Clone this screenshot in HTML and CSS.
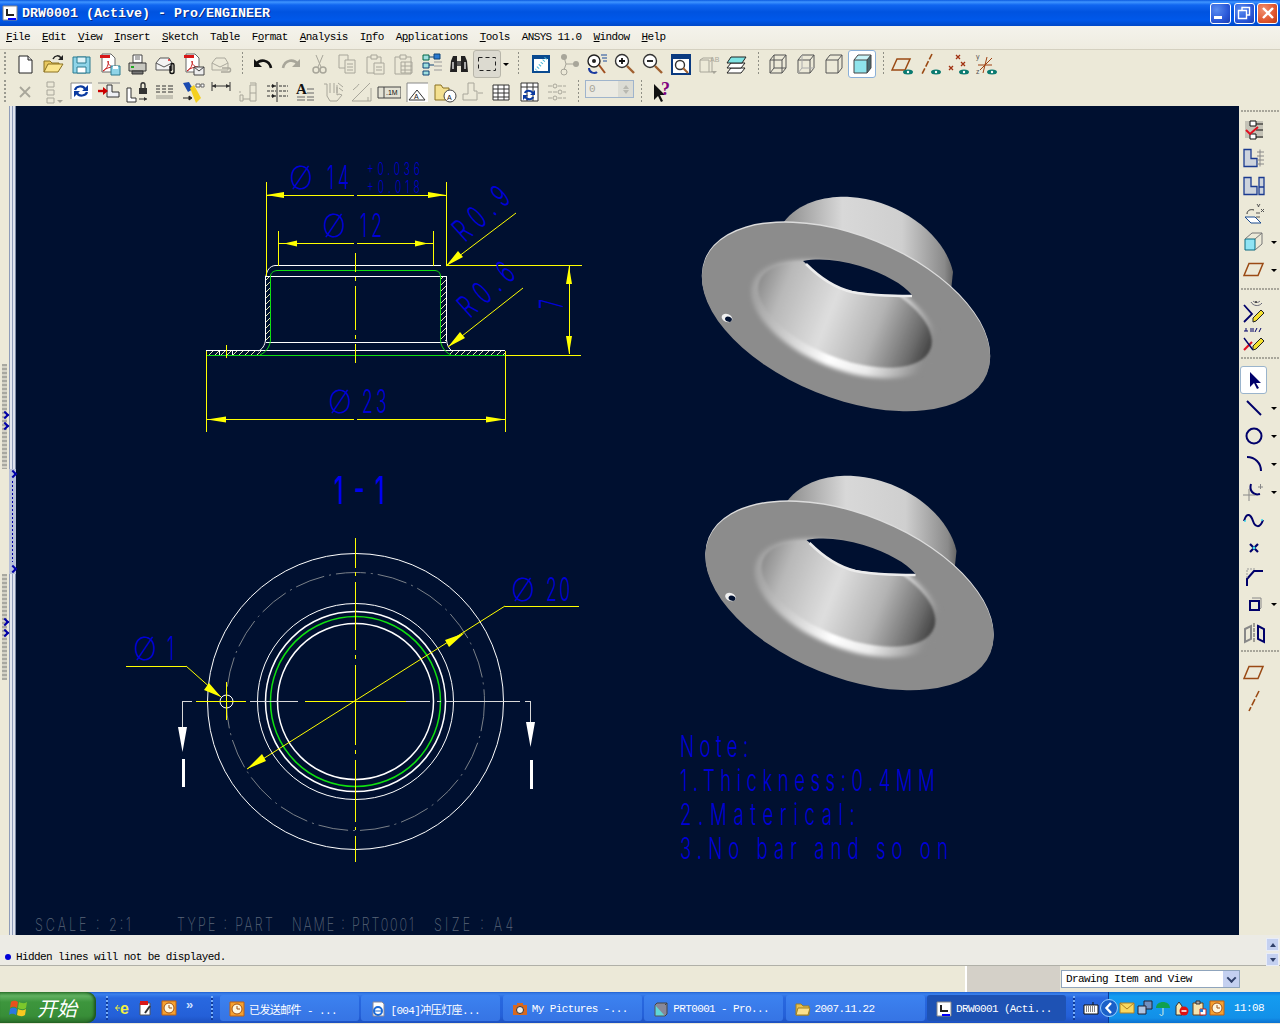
FILE: index.html
```html
<!DOCTYPE html>
<html lang="en">
<head>
<meta charset="utf-8">
<title>DRW0001 (Active) - Pro/ENGINEER</title>
<link rel="stylesheet" href="styles.css">
</head>
<body>
<svg class="sprite" aria-hidden="true">
<defs>
<symbol id="new" viewBox="0 0 24 24"><path d="M6 4h9l4 4v13H6z" fill="#fff" stroke="#222"/><path d="M15 4v4h4" fill="#ddd" stroke="#222"/></symbol>
<symbol id="open" viewBox="0 0 24 24"><path d="M3 20V9h6l2 2h7v3" fill="#e8c860" stroke="#8a7020"/><path d="M3 20l4-8h15l-5 8z" fill="#fbe58c" stroke="#8a7020"/><path d="M12 7c2-4 6-4 8-1" fill="none" stroke="#222" stroke-width="1.5"/><path d="M22 3v5h-5z" fill="#222"/></symbol>
<symbol id="save" viewBox="0 0 24 24"><path d="M4 5h17v16H4z" fill="#8fd4e8" stroke="#2a7a90"/><path d="M8 5h9v6H8z" fill="#dff3f8" stroke="#2a7a90"/><path d="M8 15h9v6H8z" fill="#fff" stroke="#2a7a90"/></symbol>
<symbol id="pdf" viewBox="0 0 24 24"><path d="M5 2h9l4 4v14H5z" fill="#fff" stroke="#666"/><path d="M3 3h10v3H3z" fill="#d81818"/><path d="M6 19c4-2 6-7 5-10 0 4 3 6 6 6-4 0-8 1-11 4z" fill="none" stroke="#c82020"/><path d="M14 14h9v9h-9z" fill="#8fd4e8" stroke="#2a7a90"/><path d="M16 14h5v3h-5z" fill="#fff"/></symbol>
<symbol id="pdfm" viewBox="0 0 24 24"><path d="M5 2h9l4 4v14H5z" fill="#fff" stroke="#666"/><path d="M3 3h10v3H3z" fill="#d81818"/><path d="M6 19c4-2 6-7 5-10 0 4 3 6 6 6-4 0-8 1-11 4z" fill="none" stroke="#c82020"/><path d="M13 15h10v8H13z" fill="#eee" stroke="#444"/><path d="M13 15l5 4 5-4" fill="none" stroke="#444"/></symbol>
<symbol id="print" viewBox="0 0 24 24"><path d="M8 3h9v8H8z" fill="#fff" stroke="#444"/><path d="M4 11h17v8H4z" fill="#c8c8c0" stroke="#333"/><path d="M7 19h11v3H7z" fill="#777" stroke="#333"/><path d="M6 14h3v2H6z" fill="#2a2"/><path d="M10 5h5M10 7h5" stroke="#666"/></symbol>
<symbol id="mail" viewBox="0 0 24 24"><path d="M3 11l4-5h9l3 5v7H3z" fill="#f4f4f4" stroke="#555"/><path d="M3 11l8 4 8-4" fill="none" stroke="#555"/><circle cx="16" cy="8" r="1" fill="#d22"/><path d="M17 14v6c0 2 4 2 4 0v-7c0-2-3-2-3 0v6" fill="none" stroke="#111" stroke-width="1.4"/></symbol>
<symbol id="maild" viewBox="0 0 24 24"><path d="M3 11l4-5h9l3 5v7H3z" fill="none" stroke="#aaa89c"/><path d="M3 11l8 4 8-4" fill="none" stroke="#aaa89c"/><path d="M12 20h8c2 0 2-4 0-4h-7" fill="none" stroke="#aaa89c" stroke-width="1.5"/></symbol>
<symbol id="undo" viewBox="0 0 24 24"><path d="M5 12c4-5 13-5 15 4" fill="none" stroke="#111" stroke-width="2.6"/><path d="M3 7v8h8z" fill="#111"/></symbol>
<symbol id="redo" viewBox="0 0 24 24"><path d="M19 12c-4-5-13-5-15 4" fill="none" stroke="#a8a69a" stroke-width="2.6"/><path d="M21 7v8h-8z" fill="#a8a69a"/></symbol>
<symbol id="cut" viewBox="0 0 24 24"><path d="M9 3l5 12M16 3l-5 12" stroke="#a8a69a" fill="none"/><circle cx="9" cy="18" r="3" fill="none" stroke="#a8a69a" stroke-width="1.5"/><circle cx="16" cy="18" r="3" fill="none" stroke="#a8a69a" stroke-width="1.5"/></symbol>
<symbol id="copy" viewBox="0 0 24 24"><path d="M4 3h9v13H4z" fill="none" stroke="#a8a69a"/><path d="M10 8h10v13H10z" fill="#ece9d8" stroke="#a8a69a"/><path d="M12 12h6M12 15h6M12 18h6" stroke="#a8a69a"/></symbol>
<symbol id="paste" viewBox="0 0 24 24"><path d="M4 5h14v16H4z" fill="none" stroke="#a8a69a"/><path d="M8 3h6v4H8z" fill="#ece9d8" stroke="#a8a69a"/><path d="M11 11h10v11H11z" fill="#ece9d8" stroke="#a8a69a"/><path d="M13 15h6M13 18h6" stroke="#a8a69a"/></symbol>
<symbol id="pastes" viewBox="0 0 24 24"><path d="M4 5h16v17H4z" fill="none" stroke="#a8a69a"/><path d="M9 3h6v4H9z" fill="#ece9d8" stroke="#a8a69a"/><path d="M10 10h11v11H10zM10 14h11M10 18h11M14 10v11" fill="none" stroke="#a8a69a"/></symbol>
<symbol id="tree" viewBox="0 0 24 24"><path d="M4 3h6v5H4z" fill="#a0e0e0" stroke="#064"/><path d="M4 11h6v5H4zM4 19h6v4H4z" fill="#a0e0e0" stroke="#147"/><path d="M10 5h5M10 13h5" stroke="#147"/><path d="M15 2h6v5h-6z" fill="#2a7ad0" stroke="#147"/><path d="M15 10h8M15 14h8M15 18h8" stroke="#999"/></symbol>
<symbol id="binoc" viewBox="0 0 24 24"><path d="M4 9l2-5h4v16H3zM20 9l-2-5h-4v16h7z" fill="#222"/><path d="M10 9h4v5h-4z" fill="#555"/><path d="M5 10h2v7H5zM17 10h2v7h-2z" fill="#aaa"/></symbol>
<symbol id="sel" viewBox="0 0 24 24"><path d="M3.500 5.500h17v13h-17z" fill="none" stroke="#222" stroke-dasharray="4 3"/></symbol>
<symbol id="repaint" viewBox="0 0 24 24"><path d="M3 3h18v18H3z" fill="#0a4a90"/><path d="M5 7h14v12H5z" fill="#fff"/><path d="M17 6L7 18" stroke="#4ab8d8" stroke-width="3" stroke-dasharray="1 2"/></symbol>
<symbol id="nodes" viewBox="0 0 24 24"><circle cx="7" cy="5" r="3" fill="#a8a69a"/><circle cx="19" cy="12" r="3" fill="#a8a69a"/><circle cx="7" cy="20" r="3" fill="none" stroke="#a8a69a"/><path d="M7 5l2 7 8 0M9 12l-2 6" stroke="#a8a69a" fill="none"/></symbol>
<symbol id="spin" viewBox="0 0 24 24"><circle cx="9" cy="9" r="6" fill="#fff" stroke="#222" stroke-width="1.4"/><circle cx="9" cy="9" r="2" fill="#222"/><path d="M14 13l6 8" stroke="#a05020" stroke-width="2"/><path d="M16 3h6M17 6h5M18 9h4" stroke="#1a4a9a"/><path d="M4 16c0 5 6 6 8 4" fill="none" stroke="#1a3aa0" stroke-width="2"/></symbol>
<symbol id="zin" viewBox="0 0 24 24"><circle cx="9" cy="9" r="6.500" fill="#fff" stroke="#333" stroke-width="1.4"/><path d="M6 9h6M9 6v6" stroke="#111" stroke-width="1.8"/><path d="M14 14l7 7" stroke="#a06030" stroke-width="2.4"/></symbol>
<symbol id="zout" viewBox="0 0 24 24"><circle cx="9" cy="9" r="6.500" fill="#fff" stroke="#333" stroke-width="1.4"/><path d="M6 9h6" stroke="#111" stroke-width="1.8"/><path d="M14 14l7 7" stroke="#a06030" stroke-width="2.4"/></symbol>
<symbol id="fit" viewBox="0 0 24 24"><path d="M3 3h18v19H3z" fill="#fff" stroke="#0a3a80" stroke-width="2"/><path d="M3 4h18v3H3z" fill="#0a3a80"/><circle cx="11" cy="13" r="4.500" fill="none" stroke="#333" stroke-width="1.4"/><path d="M14 16l5 5" stroke="#a06030" stroke-width="2"/></symbol>
<symbol id="ab" viewBox="0 0 24 24"><path d="M3 8l3-2h9v14H3zM3 8h9v12" fill="none" stroke="#a8a69a"/><text x="13" y="10" class="tiny dis">AB</text><path d="M14 19h6l-3 3z" fill="#a8a69a"/></symbol>
<symbol id="layers" viewBox="0 0 24 24"><path d="M6 16h14l-4 5H2z" fill="#fff" stroke="#222"/><path d="M6 11h14l-4 5H2z" fill="#fff" stroke="#222"/><path d="M6 5h15l-4 6H2z" fill="#7fe4e4" stroke="#222"/></symbol>
<symbol id="w1" viewBox="0 0 24 24"><path d="M4 8h12v13H4zM4 8l4-5h12v13l-4 5M16 8l4-5M8 3v13l-4 5M8 16h12" fill="none" stroke="#555"/></symbol>
<symbol id="w2" viewBox="0 0 24 24"><path d="M4 8h12v13H4zM4 8l4-5h12v13l-4 5M16 8l4-5" fill="none" stroke="#555"/><path d="M8 3v13l-4 5M8 16h12" fill="none" stroke="#aaa"/></symbol>
<symbol id="w3" viewBox="0 0 24 24"><path d="M4 8h12v13H4zM4 8l4-5h12v13l-4 5M16 8l4-5" fill="none" stroke="#555"/></symbol>
<symbol id="shade" viewBox="0 0 24 24"><path d="M4 8h13v13H4z" fill="#8fe4ec"/><path d="M4 8l4-5h13l-4 5z" fill="#c8f4f8"/><path d="M17 8l4-5v13l-4 5z" fill="#4a6a70"/><path d="M4 8h13v13H4zM4 8l4-5h13v13l-4 5M17 8l4-5" fill="none" stroke="#444"/></symbol>
<symbol id="pe" viewBox="0 0 24 24"><path d="M6 7h13l-5 11H1z" fill="none" stroke="#9a4a14" stroke-width="1.5"/><ellipse cx="17" cy="20" rx="5" ry="2.500" fill="#0a7a70"/><circle cx="17" cy="20" r="1.200" fill="#fff"/></symbol>
<symbol id="ae" viewBox="0 0 24 24"><path d="M13 2L3 22" stroke="#9a4a14" stroke-width="1.6" stroke-dasharray="6 2" fill="none"/><ellipse cx="17" cy="20" rx="5" ry="2.500" fill="#0a7a70"/><circle cx="17" cy="20" r="1.200" fill="#fff"/></symbol>
<symbol id="xe" viewBox="0 0 24 24"><path d="M9 3l4 4M13 3L9 7M2 14l4 4M6 14l-4 4M14 10l4 4M18 10l-4 4" stroke="#a03010" stroke-width="1.300"/><ellipse cx="17" cy="20" rx="5" ry="2.500" fill="#0a7a70"/><circle cx="17" cy="20" r="1.200" fill="#fff"/></symbol>
<symbol id="ce" viewBox="0 0 24 24"><path d="M12 5l-4 16M3 13h14M17 6L5 18" stroke="#a04010" fill="none"/><text x="1" y="7" class="tiny gr">y</text><text x="1" y="22" class="tiny gr">z</text><ellipse cx="17" cy="20" rx="5" ry="2.500" fill="#0a7a70"/><circle cx="17" cy="20" r="1.200" fill="#fff"/></symbol>
<symbol id="x" viewBox="0 0 24 24"><path d="M7 7l10 10M17 7L7 17" stroke="#a8a69a" stroke-width="1.800"/></symbol>
<symbol id="stack" viewBox="0 0 24 24"><path d="M6 2h7v5H6zM6 10h7v5H6zM6 18h7v5H6z" fill="none" stroke="#a8a69a"/><path d="M16 20h6l-3 3z" fill="#a8a69a"/></symbol>
<symbol id="regen" viewBox="0 0 24 24"><path d="M2 3h21v16H2z" fill="#fff"/><path d="M2 3h21M2 3v16" stroke="#888"/><path d="M6 10c1-4 8-5 10-1" fill="none" stroke="#0a3aa0" stroke-width="2.200"/><path d="M18 12c-1 4-8 5-10 1" fill="none" stroke="#0a3aa0" stroke-width="2.200"/><path d="M19 5v6h-6zM5 17v-6h6z" fill="#0a3aa0"/></symbol>
<symbol id="ins" viewBox="0 0 24 24"><path d="M10 5h5v7h7v5H10z" fill="#eef0f4" stroke="#333"/><path d="M1 3h22" stroke="#888"/><path d="M1 11h6" stroke="#c00" stroke-width="2.400"/><path d="M6 7l5 4-5 4z" fill="#c00"/></symbol>
<symbol id="lock" viewBox="0 0 24 24"><path d="M2 8h4v10h5v4H2z" fill="#fff" stroke="#333"/><path d="M14 8h8v6h-8z" fill="#333"/><path d="M16 8V5c0-3 4-3 4 0v3" fill="none" stroke="#333" stroke-width="1.400"/><path d="M14 19h8" stroke="#333"/><path d="M19 17l3 2-3 2z" fill="#333"/></symbol>
<symbol id="rows" viewBox="0 0 24 24"><path d="M3 6h4M9 6h4M15 6h5M3 9h4M9 9h4M15 9h5M3 12h4M9 12h4M15 12h5" stroke="#333"/><path d="M3 15h17v4H3z" fill="#c4c2b4"/></symbol>
<symbol id="torch" viewBox="0 0 24 24"><path d="M2 3l6-1 4 7-5 3z" fill="#1a4ab0"/><path d="M9 8l4-3 7 13-5 5z" fill="#f4d020"/><path d="M15 4h4v3h-4zM20 4h3v3h-3z" fill="#fff" stroke="#666"/><path d="M2 18h8M8 16l3 2-3 2z" stroke="#222" fill="#222"/></symbol>
<symbol id="dim" viewBox="0 0 24 24"><path d="M3 2v9M21 2v9M3 6h18" stroke="#333" fill="none"/><path d="M3 6l4-2v4zM21 6l-4-2v4z" fill="#333"/></symbol>
<symbol id="dimd" viewBox="0 0 24 24"><path d="M3 15h3v6H3zM13 5h6v16h-6zM13 13h6M3 13v-2M19 3v2M13 3h6" fill="none" stroke="#a8a69a"/><path d="M6 19h7" stroke="#a8a69a"/></symbol>
<symbol id="align" viewBox="0 0 24 24"><path d="M2 6h9M2 11h9M2 16h9M14 6h9M14 11h9M14 16h9" stroke="#333" stroke-dasharray="3 1"/><path d="M12 2v20" stroke="#333"/><path d="M7 4l4 2-4 2zM7 14l4 2-4 2z" fill="#222"/></symbol>
<symbol id="fmt" viewBox="0 0 24 24"><text x="3" y="14" class="big bk">A</text><path d="M14 9h7M14 13h7M14 17h7M14 20h7M4 17h8M4 20h8" stroke="#666"/></symbol>
<symbol id="hand" viewBox="0 0 24 24"><path d="M3 4h3v12l3 5h7l5-6-3-1-2 1V7M9 3v10M13 3v10M16 5v8M17 3l5 4M18 8l4 3" fill="none" stroke="#a8a69a"/></symbol>
<symbol id="ang" viewBox="0 0 24 24"><path d="M3 21h19M22 21V8M3 21L21 3M4 10c3-3 5-4 6-6M19 17v4" fill="none" stroke="#a8a69a"/></symbol>
<symbol id="tol" viewBox="0 0 24 24"><path d="M1 7h23v11H1zM7 7v11" fill="#e4e2d4" stroke="#444"/><text x="9" y="15" class="tiny bk">.1M</text></symbol>
<symbol id="note" viewBox="0 0 24 24"><path d="M2 3h21v19H2z" fill="#fff"/><path d="M2 3h21M2 3v19" stroke="#888"/><path d="M12 10l8 10H4z" fill="#fff" stroke="#333"/><text x="9" y="19" class="tiny bk">A</text></symbol>
<symbol id="folda" viewBox="0 0 24 24"><path d="M2 20V5h6l2 3h6v12z" fill="#f4e090" stroke="#8a7020"/><circle cx="17" cy="16" r="6" fill="#fff" stroke="#444"/><text x="14" y="20" class="tiny bk">A</text></symbol>
<symbol id="ld" viewBox="0 0 24 24"><path d="M7 3h6v8h3v9H2v-6h5z" fill="none" stroke="#a8a69a"/><path d="M17 13h5" stroke="#a8a69a"/></symbol>
<symbol id="tbl" viewBox="0 0 24 24"><path d="M4 5h16v15H4z" fill="#fff" stroke="#333"/><path d="M4 9h16M4 13h16M4 17h16M9 5v15M15 5v15" stroke="#333"/></symbol>
<symbol id="tblr" viewBox="0 0 24 24"><path d="M4 3h17v18H4z" fill="#fff" stroke="#333"/><path d="M4 7h17M10 3v18M16 3v18" stroke="#333"/><path d="M8 13c1-3 6-3 8 0M16 17c-1 3-6 3-8 0" fill="none" stroke="#0a3aa0" stroke-width="2.200"/><path d="M18 10v5h-5zM6 20v-5h5z" fill="#0a3aa0"/></symbol>
<symbol id="dims" viewBox="0 0 24 24"><path d="M3 6h18M3 12h18M3 18h18" stroke="#a8a69a" stroke-dasharray="4 1"/><circle cx="10" cy="6" r="2" fill="#ece9d8" stroke="#a8a69a"/><circle cx="15" cy="12" r="2" fill="#ece9d8" stroke="#a8a69a"/><circle cx="10" cy="18" r="2" fill="#ece9d8" stroke="#a8a69a"/></symbol>
<symbol id="help" viewBox="0 0 24 24"><path d="M6 4v16l4-4 3 6 2-1-3-6h5z" fill="#111"/><text x="13" y="15" class="bigq">?</text></symbol>
<symbol id="r1" viewBox="0 0 24 24"><path d="M3 3h18v17H3z" fill="#c4c2b6"/><path d="M8 3h6v5H8z" fill="#fff" stroke="#111"/><path d="M8 16h6v5H8z" fill="#fff" stroke="#111"/><path d="M14 6h7M14 19h7M14 12h7" stroke="#111"/><path d="M4 12l4 4 8-7" fill="none" stroke="#e01020" stroke-width="2"/></symbol>
<symbol id="r2" viewBox="0 0 24 24"><path d="M2 3.500h7v9h6v8H2z" fill="#cdd3dc" stroke="#1a3a90" stroke-width="1.300"/><path d="M18 3.500v17M15 6h7M15 10h7M15 14h7M15 18h7" stroke="#888" fill="none"/></symbol>
<symbol id="r3" viewBox="0 0 24 24"><path d="M2 3.500h7v9h6v8H2z" fill="#cdd3dc" stroke="#1a3a90" stroke-width="1.300"/><path d="M17 3.500h5v17h-5zM17 13h5" fill="#cdd3dc" stroke="#1a3a90" stroke-width="1.300"/></symbol>
<symbol id="r4" viewBox="0 0 24 24"><path d="M3 15h10l6 6H9z" fill="#fff" stroke="#1a4a90"/><path d="M5 12c0-4 4-5 7-4" fill="none" stroke="#333"/><path d="M15 2l2 3M18 2l-2 3M19 7l3 3M22 7l-3 3M14 11h4M14 15h4" stroke="#555"/></symbol>
<symbol id="r5" viewBox="0 0 24 24"><path d="M3 9h10v11H3z" fill="#90e4f4" stroke="#0a6a80"/><path d="M3 9l7-6h10v11l-7 6M13 9l7-6" fill="none" stroke="#777"/></symbol>
<symbol id="r6" viewBox="0 0 24 24"><path d="M7 5.500h14l-5 12H2z" fill="none" stroke="#9a4a14" stroke-width="1.500"/></symbol>
<symbol id="r7" viewBox="0 0 24 24"><path d="M2 6l8 9-8 8" fill="none" stroke="#00006a" stroke-width="1.800"/><path d="M9 3c2 4 8 5 11 1M11 2c2 2 5 2 7 0" fill="none" stroke="#667"/><circle cx="14" cy="3" r="1" fill="#333"/><path d="M11 23l3-1 8-8-3-3-8 8z" fill="#f4e030" stroke="#222"/></symbol>
<symbol id="r8" viewBox="0 0 24 24"><path d="M2 4h4M4 1v3M8 2h4M8 4h4" stroke="#00006a"/><path d="M15 1l-2 4M19 1l-2 4" stroke="#00006a"/><path d="M2 23l8-8" stroke="#e01020" stroke-width="2.200"/><path d="M2 11l9 12" stroke="#00006a" stroke-width="1.400"/><path d="M11 23l3-1 8-8-3-3-8 8z" fill="#f4e030" stroke="#222"/></symbol>
<symbol id="arrow" viewBox="0 0 24 24"><path d="M8 4v15l4-4 3 6 2-1-3-5h5z" fill="#00006a"/></symbol>
<symbol id="line" viewBox="0 0 24 24"><path d="M5 5l14 14" stroke="#00006a" stroke-width="2"/></symbol>
<symbol id="circle" viewBox="0 0 24 24"><circle cx="12" cy="12" r="7.500" fill="none" stroke="#00006a" stroke-width="2"/></symbol>
<symbol id="arc" viewBox="0 0 24 24"><path d="M5 5c8 0 14 6 14 14" fill="none" stroke="#00006a" stroke-width="2"/></symbol>
<symbol id="fil" viewBox="0 0 24 24"><path d="M9 4c-2 6 2 12 9 10" fill="none" stroke="#00006a" stroke-width="2"/><path d="M16 7h5M18.500 4v5M1 15h12M7 9v12" stroke="#888"/></symbol>
<symbol id="spl" viewBox="0 0 24 24"><path d="M2 13c3-10 7-6 9 0s7 8 10-1" fill="none" stroke="#00006a" stroke-width="2"/><circle cx="3" cy="13" r="1" fill="#40e0f0"/><circle cx="20" cy="12" r="1" fill="#40e0f0"/></symbol>
<symbol id="pt" viewBox="0 0 24 24"><path d="M8 8l8 8M16 8l-8 8" stroke="#00006a" stroke-width="2.200"/><circle cx="12" cy="12" r="1.400" fill="#40e0f0"/></symbol>
<symbol id="cham" viewBox="0 0 24 24"><path d="M5 22v-7l7-8h9" fill="none" stroke="#00006a" stroke-width="2"/><path d="M5 14V5h9" fill="none" stroke="#999" stroke-dasharray="2 1"/></symbol>
<symbol id="off" viewBox="0 0 24 24"><path d="M10 6h9v10" fill="none" stroke="#888"/><path d="M19 16l-3 3" stroke="#888"/><path d="M8 9h9v9H8z" fill="none" stroke="#00006a" stroke-width="2"/></symbol>
<symbol id="mir" viewBox="0 0 24 24"><path d="M3 9l6-3v13l-6 3z" fill="none" stroke="#888" stroke-width="2"/><path d="M16 6l6 3v13l-6-3z" fill="none" stroke="#00006a" stroke-width="2"/><path d="M12 3v19" stroke="#555" stroke-dasharray="4 1"/></symbol>
<symbol id="ax" viewBox="0 0 24 24"><path d="M17 2L7 22" fill="none" stroke="#9a4a14" stroke-width="1.600" stroke-dasharray="7 2"/></symbol>
<symbol id="flag" viewBox="0 0 20 20"><path d="M2 4c3-2 5-1 7 0l-1 6c-2-1-4-2-7 0z" fill="#e8501c"/><path d="M10 4c2 1 5 2 8 0l-1 6c-3 2-6 1-8 0z" fill="#7cc82c"/><path d="M1 11c3-2 5-1 7 0l-1 6c-2-1-4-2-7 0z" fill="#2c78e0"/><path d="M9 11c2 1 5 2 8 0l-1 6c-3 2-6 1-8 0z" fill="#f8c820"/></symbol>
<symbol id="clock" viewBox="0 0 16 16"><path d="M1 1h14v14H1z" fill="#f4a030" stroke="#c06010"/><circle cx="8" cy="8" r="5" fill="#fff8e0" stroke="#a05010"/><path d="M8 5v3h3" fill="none" stroke="#a05010"/></symbol>
<symbol id="ie" viewBox="0 0 16 16"><path d="M3 1h9l2 2v12H3z" fill="#fff" stroke="#889"/><circle cx="8" cy="10" r="4" fill="none" stroke="#1a6ad8" stroke-width="2"/><path d="M4 10h8" stroke="#1a6ad8"/></symbol>
<symbol id="ql1" viewBox="0 0 16 16"><path d="M0 8h5M3 5l-2 3 2 3" stroke="#f0f040" fill="none"/><text x="5" y="14" class="qle">e</text></symbol>
<symbol id="ql2" viewBox="0 0 16 16"><path d="M2 3h10v12H2z" fill="#fff" stroke="#555"/><path d="M2 1h8v4H2z" fill="#d81818"/><path d="M12 6L7 13" stroke="#333" stroke-width="2"/></symbol>
<symbol id="cam" viewBox="0 0 16 16"><path d="M1 4h14v10H1z" fill="#d86820"/><circle cx="8" cy="9" r="3.500" fill="#eee" stroke="#333"/><path d="M5 2h6v2H5z" fill="#d86820"/></symbol>
<symbol id="cube" viewBox="0 0 16 16"><path d="M2 4h10v11H2z" fill="#60d8d8" stroke="#555"/><path d="M2 4l2-2h10v11l-2 2M12 4l2-2" fill="#889" stroke="#444"/></symbol>
<symbol id="folder" viewBox="0 0 16 16"><path d="M1 14V3h5l2 2h6v9z" fill="#e8c050" stroke="#a08020"/><path d="M1 14l2-7h12l-2 7z" fill="#fbe08c" stroke="#a08020"/></symbol>
<symbol id="drw" viewBox="0 0 16 16"><path d="M1 1h14v14H1z" fill="#fff" stroke="#888"/><path d="M4 4h2v5h6v2H4z" fill="#222"/><path d="M6 14h8" stroke="#00f" stroke-width="2"/></symbol>
<symbol id="kbd" viewBox="0 0 16 16"><path d="M1 5h14v9H1z" fill="#fff" stroke="#111"/><path d="M3 7h10M3 9h10M3 11h10" stroke="#111" stroke-dasharray="1 1"/><path d="M10 5V2" stroke="#111"/></symbol>
<symbol id="env" viewBox="0 0 16 16"><path d="M1 3h14v10H1z" fill="#f8d860" stroke="#b08020"/><path d="M1 3l7 6 7-6" fill="none" stroke="#b08020"/></symbol>
<symbol id="net" viewBox="0 0 16 16"><path d="M7 1h8v8H7z" fill="#7090c0" stroke="#223"/><path d="M1 6h8v8H1z" fill="#b0c4e0" stroke="#223"/></symbol>
<symbol id="umb" viewBox="0 0 16 16"><path d="M1 8c0-8 14-8 14 0z" fill="#10a050"/><path d="M8 8v6c0 2-3 2-3 0" fill="none" stroke="#e0f0e0"/></symbol>
<symbol id="stop" viewBox="0 0 16 16"><path d="M3 15V6l3-4 3 4v9z" fill="#f4e8b0" stroke="#333"/><circle cx="11" cy="11" r="4.500" fill="#e01010"/><path d="M8.500 11h5" stroke="#fff" stroke-width="1.500"/></symbol>
<symbol id="clip" viewBox="0 0 16 16"><path d="M2 3h10v12H2z" fill="#f4e4b0" stroke="#704010"/><path d="M5 1h4v3H5z" fill="#aaa" stroke="#333"/><path d="M9 9h6v6H9z" fill="#fff" stroke="#c02020"/><path d="M9 9h3v3H9z" fill="#2a7ad0"/></symbol>
<linearGradient id="gBarrel" gradientUnits="userSpaceOnUse" x1="783" y1="0" x2="953" y2="0"><stop offset="0" stop-color="#8c8c8c"/><stop offset=".35" stop-color="#d8d8d8"/><stop offset=".7" stop-color="#cfcfcf"/><stop offset=".95" stop-color="#8a8a8a"/><stop offset="1" stop-color="#666"/></linearGradient>
<linearGradient id="gInner" gradientUnits="userSpaceOnUse" x1="752" y1="0" x2="938" y2="0"><stop offset="0" stop-color="#8c8c8c"/><stop offset=".14" stop-color="#b8b8b8"/><stop offset=".42" stop-color="#dedede"/><stop offset=".68" stop-color="#b4b4b4"/><stop offset=".9" stop-color="#6c6c6c"/><stop offset="1" stop-color="#404040"/></linearGradient>
<linearGradient id="gGlow" gradientUnits="userSpaceOnUse" x1="756" y1="0" x2="934" y2="0"><stop offset="0" stop-color="#a4a4a4"/><stop offset=".5" stop-color="#ffffff"/><stop offset=".72" stop-color="#ececec"/><stop offset="1" stop-color="#8c8c8c"/></linearGradient>
<filter id="blur2" x="-20%" y="-20%" width="140%" height="140%"><feGaussianBlur stdDeviation="2.200"/></filter>
<filter id="blur1" x="-10%" y="-10%" width="120%" height="120%"><feGaussianBlur stdDeviation="1"/></filter>
<pattern id="hatch" patternUnits="userSpaceOnUse" width="6" height="6"><path d="M0 6L6 0" stroke="#e8e8b0"/></pattern>
<g id="part">
<path d="M783 223C800 200 830 196 850 197C900 200 945 235 953 272L950 300L800 260Z" fill="url(#gBarrel)"/>
<ellipse cx="846" cy="315.500" rx="152" ry="81" transform="rotate(22 846 315.500)" fill="#dcdcdc"/>
<ellipse cx="846" cy="317" rx="152" ry="81" transform="rotate(22 846 317)" fill="#8c8c8c"/>
<ellipse cx="845" cy="319" rx="99" ry="50" transform="rotate(22 845 319)" fill="url(#gGlow)" filter="url(#blur2)"/>
<ellipse cx="845" cy="315" rx="92" ry="43" transform="rotate(22 845 315)" fill="url(#gInner)" filter="url(#blur1)"/>
<path d="M803 261C820 258 840 260 860 266C885 274 903 284 912 295C895 295 872 295 852 291C830 287 815 272 803 261Z" fill="#001030"/>
<path d="M806 264C820 278 835 288 852 292C872 296 895 296 912 296" fill="none" stroke="#ececec" stroke-width="2.500"/>
<ellipse cx="727" cy="318" rx="5.500" ry="4" transform="rotate(20 727 318)" fill="#f0f0f0"/>
<ellipse cx="728.500" cy="319" rx="3.500" ry="2.500" transform="rotate(20 728 319)" fill="#001030"/>
</g>
</defs>
</svg>

<div class="app">
  <header class="title">
    <svg class="ico16 title-ico"><use href="#drw"/></svg>
    <span class="title-text">DRW0001 (Active) - Pro/ENGINEER</span>
    <div class="wbtns">
      <span class="wbtn"><span class="glyph-min"></span></span>
      <span class="wbtn"><svg class="ico16" viewBox="0 0 16 16"><path d="M6 5V2.500h7.500V10H11" fill="none" stroke="#fff" stroke-width="1.400"/><path d="M2.500 5.500h8v8h-8z" fill="none" stroke="#fff" stroke-width="1.400"/></svg></span>
      <span class="wbtn wbtn-close"><svg class="ico16" viewBox="0 0 16 16"><path d="M3 3l10 10M13 3L3 13" stroke="#fff" stroke-width="2.400"/></svg></span>
    </div>
  </header>

  <nav class="menu">
    <span class="mi"><u>F</u>ile</span><span class="mi"><u>E</u>dit</span><span class="mi"><u>V</u>iew</span><span class="mi"><u>I</u>nsert</span><span class="mi"><u>S</u>ketch</span><span class="mi">Ta<u>b</u>le</span><span class="mi">F<u>o</u>rmat</span><span class="mi"><u>A</u>nalysis</span><span class="mi">I<u>n</u>fo</span><span class="mi">A<u>p</u>plications</span><span class="mi"><u>T</u>ools</span><span class="mi">ANSYS 11.0</span><span class="mi"><u>W</u>indow</span><span class="mi"><u>H</u>elp</span>
  </nav>

  <section class="toolbars">
    <div class="tb">
      <span class="grip"></span>
      <span class="c"><svg class="i"><use href="#new"/></svg></span><span class="c"><svg class="i"><use href="#open"/></svg></span><span class="c"><svg class="i"><use href="#save"/></svg></span><span class="c"><svg class="i"><use href="#pdf"/></svg></span><span class="c"><svg class="i"><use href="#print"/></svg></span><span class="c"><svg class="i"><use href="#mail"/></svg></span><span class="c"><svg class="i"><use href="#pdfm"/></svg></span><span class="c"><svg class="i"><use href="#maild"/></svg></span>
      <span class="sep"></span>
      <span class="c"><svg class="i"><use href="#undo"/></svg></span><span class="c"><svg class="i"><use href="#redo"/></svg></span><span class="c"><svg class="i"><use href="#cut"/></svg></span><span class="c"><svg class="i"><use href="#copy"/></svg></span><span class="c"><svg class="i"><use href="#paste"/></svg></span><span class="c"><svg class="i"><use href="#pastes"/></svg></span><span class="c"><svg class="i"><use href="#tree"/></svg></span><span class="c"><svg class="i"><use href="#binoc"/></svg></span><span class="c c-gray"><svg class="i"><use href="#sel"/></svg></span><span class="drop"></span>
      <span class="sep sep-w"></span>
      <span class="c"><svg class="i"><use href="#repaint"/></svg></span><span class="c"><svg class="i"><use href="#nodes"/></svg></span><span class="c"><svg class="i"><use href="#spin"/></svg></span><span class="c"><svg class="i"><use href="#zin"/></svg></span><span class="c"><svg class="i"><use href="#zout"/></svg></span><span class="c"><svg class="i"><use href="#fit"/></svg></span><span class="c"><svg class="i"><use href="#ab"/></svg></span><span class="c"><svg class="i"><use href="#layers"/></svg></span>
      <span class="sep sep-n"></span>
      <span class="c"><svg class="i"><use href="#w1"/></svg></span><span class="c"><svg class="i"><use href="#w2"/></svg></span><span class="c"><svg class="i"><use href="#w3"/></svg></span><span class="c c-on"><svg class="i"><use href="#shade"/></svg></span>
      <span class="sep sep-n"></span>
      <span class="c"><svg class="i"><use href="#pe"/></svg></span><span class="c"><svg class="i"><use href="#ae"/></svg></span><span class="c"><svg class="i"><use href="#xe"/></svg></span><span class="c"><svg class="i"><use href="#ce"/></svg></span>
    </div>
    <div class="tb">
      <span class="grip"></span>
      <span class="c"><svg class="i"><use href="#x"/></svg></span><span class="c"><svg class="i"><use href="#stack"/></svg></span><span class="c"><svg class="i"><use href="#regen"/></svg></span><span class="c"><svg class="i"><use href="#ins"/></svg></span><span class="c"><svg class="i"><use href="#lock"/></svg></span><span class="c"><svg class="i"><use href="#rows"/></svg></span><span class="c"><svg class="i"><use href="#torch"/></svg></span><span class="c"><svg class="i"><use href="#dim"/></svg></span><span class="c"><svg class="i"><use href="#dimd"/></svg></span><span class="c"><svg class="i"><use href="#align"/></svg></span><span class="c"><svg class="i"><use href="#fmt"/></svg></span><span class="c"><svg class="i"><use href="#hand"/></svg></span><span class="c"><svg class="i"><use href="#ang"/></svg></span><span class="c"><svg class="i"><use href="#tol"/></svg></span><span class="c"><svg class="i"><use href="#note"/></svg></span><span class="c"><svg class="i"><use href="#folda"/></svg></span><span class="c"><svg class="i"><use href="#ld"/></svg></span><span class="c"><svg class="i"><use href="#tbl"/></svg></span><span class="c"><svg class="i"><use href="#tblr"/></svg></span><span class="c"><svg class="i"><use href="#dims"/></svg></span>
      <span class="sep"></span>
      <span class="spin"><span class="spin-val">0</span><span class="spin-btns"><span class="spin-up"></span><span class="spin-dn"></span></span></span>
      <span class="sep sep-s"></span>
      <span class="c"><svg class="i"><use href="#help"/></svg></span>
    </div>
  </section>

  <main class="main">
    <aside class="left">
      <div class="rail"></div>
      <span class="grippy grippy-a"><i class="chv"></i><i class="chv"></i></span>
      <span class="grippy grippy-b"><i class="chv"></i><i class="chv"></i></span>
      <span class="mid"><i class="chv"></i><i class="mid-dots"></i><i class="chv"></i></span>
    </aside>

    <svg class="canvas" viewBox="16 106 1223 829">
      <use href="#part"/>
      <use href="#part" x="3.500" y="279"/>

      <!-- section view -->
      <rect x="266" y="277" width="5" height="64" fill="url(#hatch)"/>
      <rect x="441" y="277" width="5" height="64" fill="url(#hatch)"/>
      <rect x="207" y="350" width="55" height="5" fill="url(#hatch)"/>
      <rect x="450" y="350" width="55" height="5" fill="url(#hatch)"/>
      <g class="crisp w">
        <path d="M275 265.500H441M266 276.500H446M265.500 276V341M446.500 276V341M266 342.500H446M206 350.500H505M219.500 350V355M232.500 350V355"/>
        <path class="aa" d="M266 276C267 270 270 266 275 265.500M265.500 340C265 345 262 350 258 351M446.500 340C447 345 449 349 452 351"/>
      </g>
      <g class="crisp g">
        <path d="M277 270.500H435M270.500 276V340M440.500 276V340M207 355.500H505"/>
        <path class="aa" d="M270.500 276C271 272 274 271 277 270.500M440.500 276C440 272 438 271 435 270.500M270.500 340C270 347 266 352 260 355M440.500 340C441 347 445 352 451 355"/>
      </g>
      <g class="crisp y">
        <path d="M266.500 182V276M446.500 182V266M266 195.500H354M357 195.500H446M278.500 231V266M433.500 231V266M279 243.500H354M357 243.500H433M206.500 351V432M505.500 351V432M207 419.500H354M357 419.500H505M446 265.500H582M505 355.500H581M569.500 266V354M226.500 345V358"/>
        <path d="M355.500 253V272M355.500 277V281M355.500 286V330M355.500 335V339M355.500 344V363"/>
        <path class="aa" d="M516 213L446 266M523 288L448 347"/>
      </g>
      <g class="arrows">
        <path d="M266 195l18-3v6zM446 195l-18-3v6zM284 243.500l13-3v6zM428 243.500l-13-3v6zM207 419.500l19-3v6zM505 419.500l-19-3v6zM569 266l-3 18h6zM569 354l-3-18h6zM446 266l12-15 5 6zM448 347l12-15 5 6z"/>
      </g>
      <!-- plan view -->
      <g class="ring">
        <circle class="rw" cx="355.500" cy="701.500" r="148"/>
        <circle class="rd" cx="355.500" cy="701.500" r="129"/>
        <circle class="rw" cx="355.500" cy="701.500" r="98"/>
        <circle class="rw2" cx="355.500" cy="701.500" r="90"/>
        <circle class="rg" cx="355.500" cy="701.500" r="85"/>
        <circle class="rw2" cx="355.500" cy="701.500" r="78"/>
        <circle class="rw" cx="226.500" cy="701.500" r="6.500"/>
      </g>
      <g class="crisp w2">
        <path d="M182.500 701.500V727M182 701.500H192M196 701.500H246M250 701.500H298M305 701.500H309M405 701.500H430M437 701.500H441M446 701.500H520M525 701.500H530.500V722"/>
      </g>
      <g class="crisp y">
        <path d="M226.500 682V720M196 701.500H246M305 701.500H406M355.500 538V568M355.500 572V576M355.500 582V650M355.500 655V659M355.500 665V745M355.500 750V754M355.500 760V822M355.500 827V830M355.500 836V862M126 666.500H186M505 606.500H579"/>
        <path class="aa" d="M186 666L221 697M505 606L247 769"/>
      </g>
      <g class="arrows">
        <path d="M221 697L204 690l5-7zM464.500 633L449 647l-4-7zM247 769L262 754l4 7z"/>
      </g>
      <path class="wfill" d="M178 727h9l-4.500 25zM526 722h9l-4.500 25zM182 759h3v28h-3zM530 760h3v29h-3z"/>

      <!-- annotations -->
      <g class="cad">
        <text x="289" y="189" class="s32 phi">Ø</text>
        <text transform="translate(327 189) scale(.55 1)" class="s32" textLength="40">14</text>
        <text transform="translate(367 175) scale(.6 1)" class="s17" textLength="88">+0.036</text>
        <text transform="translate(367 193) scale(.6 1)" class="s17" textLength="88">+0.018</text>
        <text x="322" y="237" class="s32 phi">Ø</text>
        <text transform="translate(360 237) scale(.55 1)" class="s32" textLength="40">12</text>
        <text x="328" y="413" class="s32 phi">Ø</text>
        <text transform="translate(362 413) scale(.55 1)" class="s32" textLength="45">23</text>
        <text transform="translate(465 243) rotate(-42) scale(.62 1)" class="s32" textLength="103">R0.9</text>
        <text transform="translate(470 319) rotate(-42) scale(.62 1)" class="s32" textLength="103">R0.6</text>
        <text transform="translate(563 309) rotate(-90) scale(.55 1)" class="s32">7</text>
        <text x="133" y="660" class="s32 phi">Ø</text>
        <text transform="translate(167 660) scale(.55 1)" class="s32">1</text>
        <text x="511" y="601" class="s32 phi">Ø</text>
        <text transform="translate(546 601) scale(.55 1)" class="s32" textLength="44">20</text>
        <text transform="translate(334 504) scale(.6 1)" class="s38" textLength="84">1 - 1</text>
        <text transform="translate(680 757) scale(.62 1)" class="s30" textLength="110">Note:</text>
        <text transform="translate(680 791) scale(.62 1)" class="s30" textLength="411">1.Thickness:0.4MM</text>
        <text transform="translate(680 825) scale(.62 1)" class="s30" textLength="282">2.Materical:</text>
        <text transform="translate(680 859) scale(.62 1)" class="s30" textLength="432">3.No bar and so on</text>
      </g>
      <g class="cad-gray">
        <text transform="translate(35 931) scale(.7 1)" textLength="137">SCALE : 2:1</text>
        <text transform="translate(177 931) scale(.7 1)" textLength="137">TYPE : PART</text>
        <text transform="translate(292 931) scale(.7 1)" textLength="174">NAME : PRT0001</text>
        <text transform="translate(434 931) scale(.7 1)" textLength="113">SIZE : A4</text>
      </g>
    </svg>

    <aside class="right">
      <span class="rsep rsep-top"></span>
      <span class="rc"><svg class="i"><use href="#r1"/></svg></span>
      <span class="rc"><svg class="i"><use href="#r2"/></svg></span>
      <span class="rc"><svg class="i"><use href="#r3"/></svg></span>
      <span class="rc"><svg class="i"><use href="#r4"/></svg></span>
      <span class="rc rd-a"><svg class="i"><use href="#r5"/></svg></span>
      <span class="rc rd-a"><svg class="i"><use href="#r6"/></svg></span>
      <span class="rsep"></span>
      <span class="rc"><svg class="i"><use href="#r7"/></svg></span>
      <span class="rc"><svg class="i"><use href="#r8"/></svg></span>
      <span class="rsep"></span>
      <span class="rc rc-on"><svg class="i"><use href="#arrow"/></svg></span>
      <span class="rc rd-a"><svg class="i"><use href="#line"/></svg></span>
      <span class="rc rd-a"><svg class="i"><use href="#circle"/></svg></span>
      <span class="rc rd-a"><svg class="i"><use href="#arc"/></svg></span>
      <span class="rc rd-a"><svg class="i"><use href="#fil"/></svg></span>
      <span class="rc"><svg class="i"><use href="#spl"/></svg></span>
      <span class="rc"><svg class="i"><use href="#pt"/></svg></span>
      <span class="rc"><svg class="i"><use href="#cham"/></svg></span>
      <span class="rc rd-a"><svg class="i"><use href="#off"/></svg></span>
      <span class="rc"><svg class="i"><use href="#mir"/></svg></span>
      <span class="rsep"></span>
      <span class="rc"><svg class="i"><use href="#r6"/></svg></span>
      <span class="rc"><svg class="i"><use href="#ax"/></svg></span>
    </aside>
  </main>

  <section class="msg">
    <p class="msg-line"><span class="dot"></span>Hidden lines will not be displayed.</p>
    <div class="msg-scroll"><span class="sb sb-up"></span><span class="sb sb-dn"></span></div>
  </section>

  <section class="status">
    <span class="st-gray"></span>
    <span class="combo"><span class="combo-text">Drawing Item and View</span><span class="combo-btn"></span></span>
  </section>

  <footer class="taskbar">
    <span class="start"><svg class="flag"><use href="#flag"/></svg><span class="start-t">开始</span></span>
    <span class="tgrip tgrip-a"></span>
    <span class="ql"><svg class="ico16"><use href="#ql1"/></svg><svg class="ico16"><use href="#ql2"/></svg><svg class="ico16"><use href="#clock"/></svg><span class="more">»</span></span>
    <span class="tgrip"></span>
    <div class="tasks">
      <span class="task"><svg class="ico16"><use href="#clock"/></svg>已发送邮件 - ...</span>
      <span class="task"><svg class="ico16"><use href="#ie"/></svg>[004]冲压灯座...</span>
      <span class="task"><svg class="ico16"><use href="#cam"/></svg>My Pictures -...</span>
      <span class="task"><svg class="ico16"><use href="#cube"/></svg>PRT0001 - Pro...</span>
      <span class="task"><svg class="ico16"><use href="#folder"/></svg>2007.11.22</span>
      <span class="task task-on"><svg class="ico16"><use href="#drw"/></svg>DRW0001 (Acti...</span>
    </div>
    <span class="tgrip tgrip-b"></span>
    <svg class="ico16 kbd"><use href="#kbd"/></svg>
    <div class="tray">
      <span class="chev"><svg class="ico16" viewBox="0 0 16 16"><path d="M10 3L5.500 8l4.500 5" fill="none" stroke="#fff" stroke-width="2.400"/></svg></span>
      <svg class="ico16"><use href="#env"/></svg><svg class="ico16"><use href="#net"/></svg><svg class="ico16"><use href="#umb"/></svg><svg class="ico16"><use href="#stop"/></svg><svg class="ico16"><use href="#clip"/></svg><svg class="ico16"><use href="#clock"/></svg>
      <span class="clock">11:08</span>
    </div>
  </footer>
</div>
</body>
</html>
```

FILE: styles.css
```css
* { box-sizing: border-box; }
html, body { margin: 0; padding: 0; }
body { width: 1280px; height: 1024px; overflow: hidden; background: #ece9d8; font-family: "Liberation Mono", "Noto Sans CJK SC", monospace; font-size: 11px; letter-spacing: -0.61px; color: #000; }
.sprite { width: 0; height: 0; overflow: hidden; display: block; }
.app { width: 1280px; height: 1024px; display: flex; flex-direction: column; }
.ico16 { width: 16px; height: 16px; flex: none; display: block; }
.i { width: 24px; height: 24px; display: block; }

/* window title */
.title { height: 26px; flex: none; display: flex; align-items: center; padding: 0 2px; background: linear-gradient(#0a5ae0 0, #3f95ff 2px, #1066f0 5px, #0053e0 12px, #0058ea 20px, #0048c8 26px); }
.title-ico { margin-right: 4px; }
.title-text { color: #fff; font-size: 13.33px; font-weight: 700; letter-spacing: 0; white-space: pre; text-shadow: 1px 1px 0 #0a2a80; }
.wbtns { margin-left: auto; display: flex; gap: 2.500px; }
.wbtn { width: 21px; height: 21px; border: 1px solid #fff; border-radius: 3px; background: radial-gradient(circle at 30% 30%, #5a8cf0, #2a58d8 60%, #1a3cb0); display: flex; align-items: center; justify-content: center; }
.wbtn-close { background: radial-gradient(circle at 30% 30%, #f09070, #e0562e 60%, #b83a14); }
.glyph-min { width: 8px; height: 3px; background: #fff; margin: 9px 5px 0 0; }

/* menu */
.menu { height: 23px; flex: none; display: flex; align-items: center; padding-bottom: 2px; background: linear-gradient(#f4f3ec, #efece0); white-space: pre; }
.mi { padding: 0 6px; }

/* toolbars */
.toolbars { height: 57px; flex: none; border-top: 1px solid #d4d0c0; background: #ece9d8; }
.tb { height: 28px; display: flex; align-items: center; position: relative; padding-left: 11px; }
.grip { position: absolute; left: 4px; top: 2px; bottom: 2px; width: 2px; background: repeating-linear-gradient(#9a9a90 0 2px, transparent 2px 4px); }
.c { width: 28px; height: 28px; flex: none; display: flex; align-items: center; justify-content: center; }
.c-gray { background: #dcdad0; border: 1px solid #b8b6aa; border-radius: 3px; }
.c-on { background: #fff; border: 1px solid #8ab0d8; border-radius: 3px; }
.drop { width: 10px; height: 28px; flex: none; display: flex; align-items: center; justify-content: center; }
.drop::after { content: ""; border: 3px solid transparent; border-top: 3px solid #000; border-bottom: 0; }
.sep { width: 14px; height: 26px; flex: none; position: relative; }
.sep::after { content: ""; position: absolute; left: 7px; top: 1px; bottom: 1px; width: 1px; background: repeating-linear-gradient(#8f8f85 0 2px, transparent 2px 4px); }
.sep-w { width: 16px; }
.sep-n { width: 13px; }
.sep-s { width: 12px; }
.spin { width: 49px; height: 18px; flex: none; display: flex; margin-bottom: 6px; border: 1px solid #9fb4cc; background: #ebeae2; color: #a8a69a; font-size: 11px; align-items: center; }
.spin-val { padding-left: 3px; flex: 1; }
.spin-btns { width: 15px; height: 16px; display: flex; flex-direction: column; gap: 1px; background: #dcdcd4; align-items: center; justify-content: center; }
.spin-up { border: 3px solid transparent; border-bottom: 4px solid #b8b8b0; border-top: 0; }
.spin-dn { border: 3px solid transparent; border-top: 4px solid #b8b8b0; border-bottom: 0; }

/* main */
.main { height: 829px; flex: none; display: flex; }
.left { width: 16px; flex: none; position: relative; background: #ece9d8; }
.rail { position: absolute; left: 9px; top: 0; bottom: 0; width: 7px; background: linear-gradient(90deg, #8f9cb8 0 1px, #e4e8f0 1px 3px, #8f9cb8 3px 4px, #dfe4ee 4px 6px, #7e8ca8 6px 7px); }
.chv { display: block; width: 6px; height: 6px; flex: none; border: solid #0000a8; border-width: 2px 2px 0 0; transform: rotate(45deg); }
.grippy { position: absolute; left: 2px; width: 5px; background: repeating-linear-gradient(#a8a8a0 0 2px, #d4d2c6 2px 4px); display: flex; flex-direction: column; justify-content: flex-end; gap: 5px; }
.grippy-a { top: 258px; height: 105px; padding-bottom: 40px; }
.grippy-b { top: 468px; height: 106px; padding-bottom: 44px; }
.mid { position: absolute; left: 9px; top: 363px; width: 7px; height: 105px; background: #b8c0d8; display: flex; flex-direction: column; align-items: center; justify-content: space-between; padding: 2px 0; }
.mid-dots { width: 1px; flex: 1; margin: 4px 0; background: repeating-linear-gradient(#0000a8 0 2px, transparent 2px 4px); }
.canvas { width: 1223px; height: 829px; flex: none; display: block; background: #001030; }
.right { width: 41px; flex: none; background: #ece9d8; display: flex; flex-direction: column; }
.rc { height: 28px; width: 27px; margin-left: 1px; flex: none; display: flex; align-items: center; justify-content: center; position: relative; }
.rd-a::after { content: ""; position: absolute; left: 31px; top: 13px; border: 3px solid transparent; border-top: 3px solid #000; border-bottom: 0; }
.rc-on { background: #fff; border: 1px solid #9ab4cc; border-radius: 3px; }
.rsep { height: 13px; flex: none; margin-left: 2px; background: repeating-linear-gradient(90deg, #a8a69a 0 2px, transparent 2px 3px) 0 4px/100% 2px no-repeat; }
.rsep-top { height: 10px; }

/* svg canvas styling */
.crisp { fill: none; stroke-width: 1; shape-rendering: crispEdges; }
.crisp .aa { shape-rendering: auto; }
.w { stroke: #fff; }
.w2 { stroke: #d8d8d8; }
.g { stroke: #10e010; }
.y { stroke: #ffff00; }
.arrows { fill: #ffff00; }
.wfill { fill: #fff; }
.ring circle { fill: none; }
.rw { stroke: #fff; stroke-width: 1; }
.rw2 { stroke: #fff; stroke-width: 1.500; }
.rg { stroke: #10e010; stroke-width: 1.500; }
.rd { stroke: #7a8088; stroke-width: 1; stroke-dasharray: 30 5 2 5; }
.cad { fill: #0000d8; font-family: "Inter", "Liberation Sans", sans-serif; font-weight: 300; letter-spacing: 0; }
.s17 { font-size: 17px; fill: #0000c8; }
.s30 { font-size: 30px; }
.s32 { font-size: 32px; }
.phi { font-weight: 200; }
.s38 { font-size: 38px; fill: #0000f0; font-weight: 500; }
.cad-gray { fill: #5a6678; font-family: "Inter", "Liberation Sans", sans-serif; font-weight: 200; font-size: 18px; letter-spacing: 0; }

.tiny { font: 7px "Liberation Sans", sans-serif; letter-spacing: 0; }
.dis { fill: #a8a69a; }
.gr { fill: #555; }
.bk { fill: #111; }
.big { font: 700 15px "Liberation Serif", serif; letter-spacing: 0; }
.bigq { font: 700 18px "Liberation Serif", serif; letter-spacing: 0; fill: #800080; }
.qle { font: 700 16px "Liberation Sans", sans-serif; letter-spacing: 0; fill: #f0f040; }

/* message area */
.msg { height: 31px; flex: none; display: flex; align-items: center; background: #ecebe5; border-bottom: 1px solid #b0b0a8; position: relative; }
.msg-line { margin: 14px 0 0 5px; display: flex; align-items: center; white-space: pre; }
.dot { width: 6px; height: 6px; margin-right: 5px; border-radius: 50%; background: #0000d8; }
.msg-scroll { position: absolute; right: 1px; top: 3px; width: 13px; display: flex; flex-direction: column; gap: 2px; }
.sb { height: 13px; background: #c4d0f0; border: 1px solid #e8ecf8; display: flex; align-items: center; justify-content: center; }
.sb-up::after { content: ""; border: 3px solid transparent; border-bottom: 4px solid #30406a; border-top: 0; }
.sb-dn::after { content: ""; border: 3px solid transparent; border-top: 4px solid #30406a; border-bottom: 0; }

/* status */
.status { height: 26px; flex: none; display: flex; background: #ece9d8; padding-left: 965px; align-items: stretch; }
.st-gray { width: 95px; border-left: 2px solid #fff; background: #d4d0c8; }
.combo { margin: 4px 0 4px 1px; width: 179px; height: 18px; border: 1px solid #8fa4bc; background: #fff; display: flex; align-items: center; padding-left: 4px; white-space: pre; }
.combo-text { flex: 1; }
.combo-btn { width: 16px; height: 16px; background: #c4d0f0; display: flex; align-items: center; justify-content: center; }
.combo-btn::after { content: ""; width: 5px; height: 5px; border: solid #30406a; border-width: 0 2px 2px 0; transform: rotate(45deg) translate(-1px, -1px); }

/* taskbar */
.taskbar { height: 31px; flex: none; display: flex; align-items: center; background: linear-gradient(#1f5fd0 0, #3a80ec 2px, #2868e0 6px, #2460d8 24px, #1c50c0 31px); color: #fff; }
.start { width: 96px; height: 31px; flex: none; display: flex; align-items: center; padding-left: 9px; gap: 8px; border-radius: 0 9px 9px 0; background: linear-gradient(#3c8c3c 0, #60b060 4px, #3d963d 10px, #388e38 24px, #2a6e2a 31px); box-shadow: inset -2px 0 3px #1c501c; }
.flag { width: 20px; height: 20px; flex: none; }
.start-t { font: italic 20px "Noto Sans CJK SC", sans-serif; letter-spacing: 0; color: #fff; }
.tgrip { width: 2px; height: 24px; flex: none; margin: 0 6px; background: repeating-linear-gradient(#7ab0f8 0 2px, #0f3a9a 2px 4px); }
.tgrip-a { margin-left: 10px; margin-right: 4px; }
.ql { width: 93px; flex: none; display: flex; align-items: center; gap: 7px; padding-left: 3px; }
.more { font: 700 13px "Liberation Sans", sans-serif; letter-spacing: 0; color: #cfe0ff; margin: -6px 0 0 2px; }
.tasks { display: flex; gap: 2.400px; margin-left: 1px; }
.task { width: 139px; height: 26px; flex: none; display: flex; align-items: center; gap: 4px; padding: 2px 0 0 9px; border-radius: 3px; background: linear-gradient(#3c82f0, #3674e4); font-size: 11px; white-space: pre; overflow: hidden; }
.task-on { background: #1e52b4; }
.tgrip-b { margin: 0 6px 0 7px; }
.kbd { margin: 0 7px 0 2px; }
.tray { flex: 1; height: 31px; display: flex; align-items: center; gap: 2px; padding-left: 10px; background: linear-gradient(#0d7ce0, #149cf0 4px, #1290e8 26px, #0c70d0); border-left: 1px solid #0a3a9a; margin-left: 2px; position: relative; }
.chev { position: absolute; left: -9px; top: 7px; width: 18px; height: 18px; border-radius: 50%; background: #1a60c8; border: 1px solid #9ad0ff; }
.clock { margin-left: 7px; font-size: 11px; }
```
